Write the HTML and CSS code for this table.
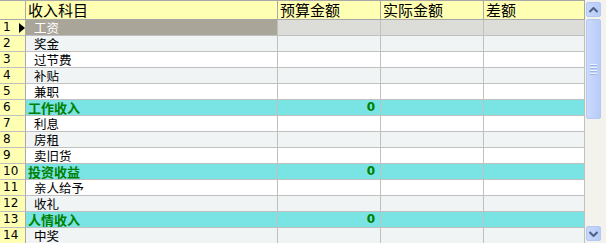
FILE: index.html
```html
<!DOCTYPE html>
<html>
<head>
<meta charset="utf-8">
<link rel="stylesheet" href="styles.css">
</head>
<body>
<div class="wrap">
  <div class="grid">
    <div class="hc rh"></div>
    <div class="hc">收入科目</div>
    <div class="hc">预算金额</div>
    <div class="hc">实际金额</div>
    <div class="hc">差额</div>

    <div class="c rh"><span>1</span><span class="arrow"></span></div>
    <div class="c sel sub">工资</div>
    <div class="c selo"></div><div class="c selo"></div><div class="c selo"></div>

    <div class="c rh">2</div>
    <div class="c alt sub">奖金</div><div class="c alt"></div><div class="c alt"></div><div class="c alt"></div>

    <div class="c rh">3</div>
    <div class="c sub">过节费</div><div class="c"></div><div class="c"></div><div class="c"></div>

    <div class="c rh">4</div>
    <div class="c alt sub">补贴</div><div class="c alt"></div><div class="c alt"></div><div class="c alt"></div>

    <div class="c rh">5</div>
    <div class="c sub">兼职</div><div class="c"></div><div class="c"></div><div class="c"></div>

    <div class="c rh">6</div>
    <div class="c cat">工作收入</div><div class="c cat num">0</div><div class="c cat"></div><div class="c cat"></div>

    <div class="c rh">7</div>
    <div class="c sub">利息</div><div class="c"></div><div class="c"></div><div class="c"></div>

    <div class="c rh">8</div>
    <div class="c alt sub">房租</div><div class="c alt"></div><div class="c alt"></div><div class="c alt"></div>

    <div class="c rh">9</div>
    <div class="c sub">卖旧货</div><div class="c"></div><div class="c"></div><div class="c"></div>

    <div class="c rh">10</div>
    <div class="c cat">投资收益</div><div class="c cat num">0</div><div class="c cat"></div><div class="c cat"></div>

    <div class="c rh">11</div>
    <div class="c sub">亲人给予</div><div class="c"></div><div class="c"></div><div class="c"></div>

    <div class="c rh">12</div>
    <div class="c alt sub">收礼</div><div class="c alt"></div><div class="c alt"></div><div class="c alt"></div>

    <div class="c rh">13</div>
    <div class="c cat">人情收入</div><div class="c cat num">0</div><div class="c cat"></div><div class="c cat"></div>

    <div class="c rh">14</div>
    <div class="c alt sub">中奖</div><div class="c alt"></div><div class="c alt"></div><div class="c alt"></div>
  </div>
  <div class="sb">
    <div class="btn up"><svg width="9" height="6" viewBox="0 0 9 6"><path d="M0.5 5 L4.5 1 L8.5 5" fill="none" stroke="#4d6185" stroke-width="2"/></svg></div>
    <div class="thumb"><span></span><span></span><span></span><span></span></div>
    <div class="track"></div>
    <div class="btn down"><svg width="9" height="6" viewBox="0 0 9 6"><path d="M0.5 1 L4.5 5 L8.5 1" fill="none" stroke="#4d6185" stroke-width="2"/></svg></div>
  </div>
</div>
</body>
</html>
```
FILE: styles.css
```css
html, body {
  margin: 0;
  padding: 0;
  background: #ffffff;
  overflow: hidden;
}
.wrap {
  display: flex;
  width: 606px;
  height: 243px;
  overflow: hidden;
}
.grid {
  display: grid;
  grid-template-columns: 26px 252px 103px 103px 101px;
  grid-auto-rows: 16px;
  grid-template-rows: 20px;
  width: 585px;
  height: 243px;
  overflow: hidden;
  font-family: "Noto Sans CJK SC", sans-serif;
  font-size: 12.5px;
  color: #000;
}
.hc {
  box-sizing: border-box;
  height: 20px;
  background: #ffffb4;
  border-top: 1px solid #a8a8a8;
  border-right: 1px solid #a8a8a8;
  border-bottom: 1px solid #a8a8a8;
  font-size: 15px;
  line-height: 18px;
  padding-left: 2px;
  white-space: nowrap;
  overflow: hidden;
}
.c {
  box-sizing: border-box;
  height: 16px;
  border-right: 1px solid #c0c0c0;
  border-bottom: 1px solid #c0c0c0;
  line-height: 15px;
  white-space: nowrap;
  overflow: hidden;
  background: #ffffff;
}
.rh {
  background: #ffffb4;
  font-family: "DejaVu Sans", sans-serif;
  font-size: 12px;
  padding-left: 3px;
  display: flex;
  align-items: center;
  border-right-color: #a8a8a8;
}
.arrow {
  width: 0;
  height: 0;
  margin-left: 8px;
  border-top: 5px solid transparent;
  border-bottom: 5px solid transparent;
  border-left: 6px solid #000;
}
.alt { background: #f0f4f5; }
.sub { padding-left: 8px; }
.sel { background: #a9a599; color: #ffffff; }
.selo { background: #dcdcd8; }
.cat {
  background: #7ae3e3;
  color: #008000;
  font-weight: bold;
  font-size: 13px;
  padding-left: 2px;
}
.num {
  text-align: right;
  padding-right: 5px;
  font-family: "DejaVu Sans", sans-serif;
  font-size: 12px;
}
.sb {
  width: 21px;
  height: 243px;
  background: #f4f2ec;
  display: flex;
  flex-direction: column;
  align-items: flex-start;
  padding-left: 1px;
  box-sizing: border-box;
}
.btn {
  width: 15px;
  height: 15px;
  box-sizing: border-box;
  border: 1px solid #b4c8f4;
  border-radius: 2px;
  background: linear-gradient(to right, #c8d8fc, #b8cbf8);
  display: flex;
  align-items: center;
  justify-content: center;
}
.up { margin-top: 2px; }
.thumb {
  margin-top: 2px;
  width: 15px;
  height: 100px;
  box-sizing: border-box;
  border: 1px solid #b4c8f4;
  border-radius: 2px;
  background: linear-gradient(to right, #cad9fd, #b9ccf8);
  display: flex;
  flex-direction: column;
  align-items: center;
  justify-content: center;
  gap: 1px;
}
.thumb span {
  width: 7px;
  height: 1px;
  background: #eef3fe;
  border-bottom: 1px solid #9fb4e6;
}
.track { flex: 1; }
.down { margin-bottom: 2px; }
```
